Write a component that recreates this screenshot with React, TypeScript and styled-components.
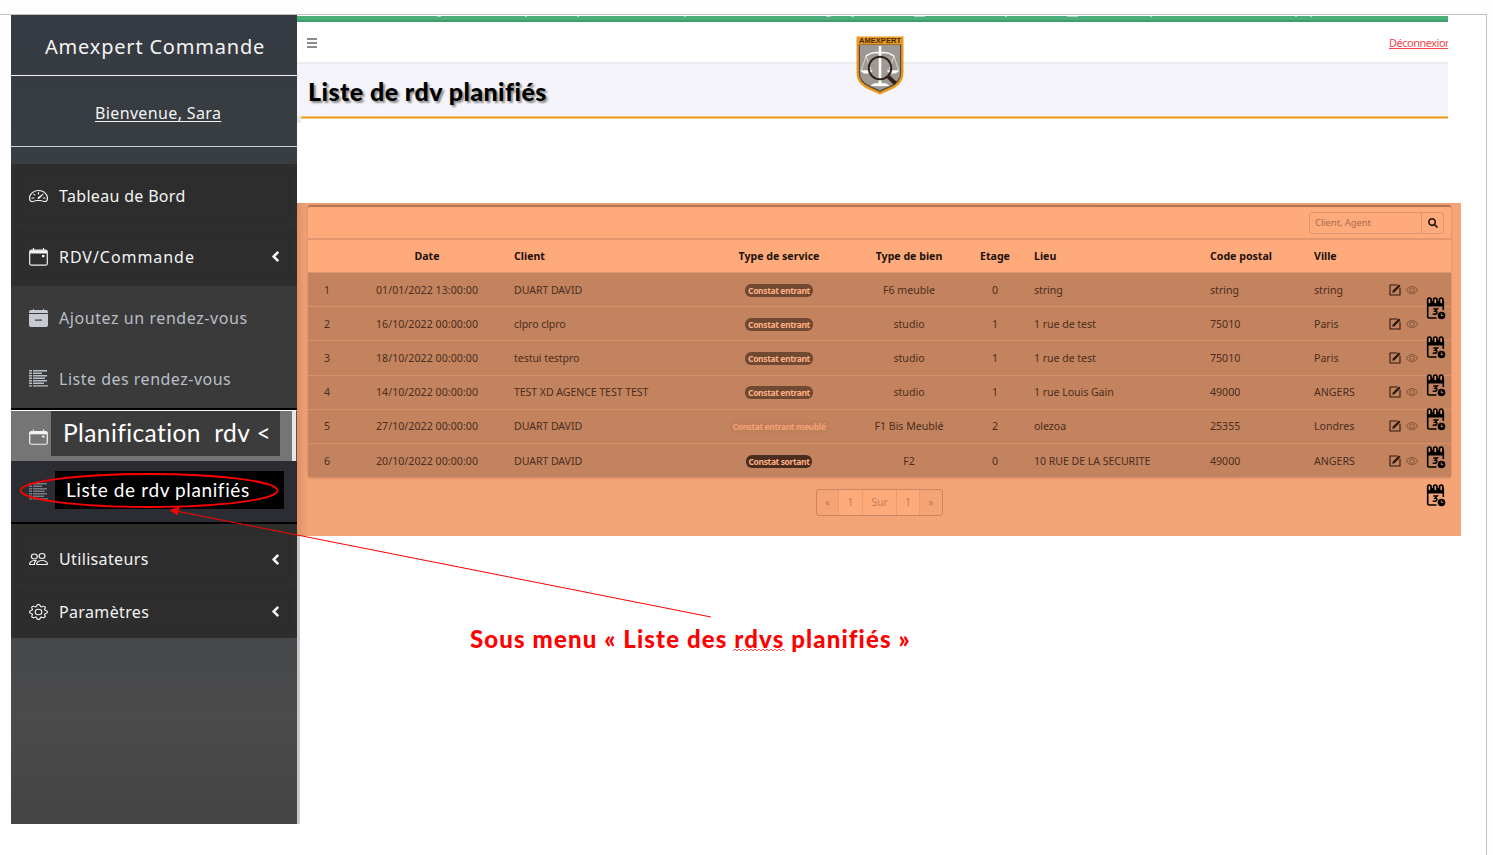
import React from "react";
import styled, { createGlobalStyle, css } from "styled-components";
import { BsSpeedometer2, BsPeople, BsGear, BsEye } from "react-icons/bs";
import { FaSearch, FaAngleLeft } from "react-icons/fa";

const GlobalStyle = createGlobalStyle`
  * { box-sizing: border-box; }
  body { margin: 0; background: #fdfdfd; font-family: "Noto Sans", "Open Sans", sans-serif; overflow: hidden; }
`;

const Screen = styled.div`
  position: relative;
  width: 1493px;
  height: 855px;
  padding-top: 14px;
  overflow: hidden;
`;
const Slide = styled.div`
  display: flex;
  width: 1487px;
  height: 841px;
  padding-left: 11px;
  background: #fff;
  border: 1px solid #c3c3c3;
  border-width: 1px 1px 0 0;
`;

const Sidebar = styled.aside`
  width: 286px;
  height: 809px;
  flex: none;
  display: flex;
  flex-direction: column;
  color: #f3f3f3;
  background: linear-gradient(#363a43 0, #383e41 150px, #45474a 622px, #4b4b4b 700px, #444 809px);
`;
const Brand = styled.div`
  height: 61px;
  padding: 17px 0 0 34px;
  border-bottom: 1px solid #f4f5f6;
  font-size: 20px;
  line-height: 30px;
  letter-spacing: 0.8px;
  white-space: nowrap;
`;
const Welcome = styled.div`
  height: 71px;
  margin-bottom: 17px;
  padding: 25px 0 0 84px;
  border-bottom: 1px solid #c9ccd2;
  font-size: 16px;
  line-height: 24px;
  letter-spacing: 0.36px;
  text-decoration: underline;
  text-underline-offset: 2px;
  text-decoration-thickness: 1px;
  white-space: nowrap;
`;
type Tone = "main" | "sub" | "active" | "current";
const tones = {
  main: css`background: #2d2d2d; box-shadow: inset 0 0 7px #323232;`,
  sub: css`background: #3a3a3a; color: #b9bec8;`,
  active: css`background: #757575; border-top: 1px solid #fff; border-right: 1px solid #555;`,
  current: css`background: #2c2d32; color: #777a84;`,
};
const MenuItem = styled.div<{ $tone: Tone; $h: number; $drop?: number; $line?: boolean }>`
  display: flex;
  align-items: center;
  height: ${p => p.$h}px;
  padding: ${p => p.$drop ?? 2}px 13px 0 18px;
  font-size: 16px;
  white-space: nowrap;
  ${p => tones[p.$tone]}
  ${p => p.$line && css`border-bottom: 2px solid #000;`}
  > svg { flex: none; }
`;
const Label = styled.span<{ $ls: number }>`
  flex: 1;
  margin-left: 11px;
  letter-spacing: ${p => p.$ls}px;
`;
const Cover = styled.span<{ $black?: boolean }>`
  display: flex;
  align-items: center;
  flex: none;
  width: 229px;
  height: ${p => (p.$black ? 38 : 45)}px;
  margin: 0 0 ${p => (p.$black ? 4 : 5)}px ${p => (p.$black ? 7 : 3)}px;
  padding-left: ${p => (p.$black ? 11 : 12)}px;
  background: ${p => (p.$black ? "#000" : "#3c3c3c")};
  color: #fff;
  font-family: Lato, sans-serif;
  font-size: ${p => (p.$black ? 19 : 24.5)}px;
  letter-spacing: ${p => (p.$black ? 0.61 : 0.41)}px;
  line-height: 1;
`;
const ActiveEdge = styled.span`
  width: 4px;
  height: 50px;
  margin-left: 12px;
  background: #e6e6e6;
  flex: none;
`;
const DashboardIcon = styled(BsSpeedometer2)`
  width: 19px;
  height: 16px;
`;
const UsersIcon = styled(BsPeople)`
  width: 19px;
  height: 16px;
`;
const SettingsIcon = styled(BsGear)`
  width: 19px;
  height: 16px;
`;

const Main = styled.main`
  flex: 1;
  display: flex;
  flex-direction: column;
  align-items: flex-start;
`;
const GreenBar = styled.div`
  display: flex;
  width: 1151px;
  height: 7px;
  padding-left: 140px;
  border-top: 1px solid #fff;
  background: linear-gradient(#4bae7b 0 4px, #3e9e6c 4px);
`;
const TabMark = styled.i<{ $gap: number; $w: number }>`
  width: ${p => p.$w}px;
  height: 1px;
  margin-right: ${p => p.$gap}px;
  background: #a8d6be;
`;
const TopBar = styled.header`
  display: flex;
  justify-content: space-between;
  align-items: flex-start;
  width: 1151px;
  height: 42px;
  padding: 16px 0 0 10px;
  overflow: hidden;
  border-bottom: 2px solid #ebecf1;
`;
const Logout = styled.a`
  width: 59px;
  margin-top: -4px;
  overflow: hidden;
  white-space: nowrap;
  color: #f4454c;
  font-size: 11px;
  line-height: 18px;
  letter-spacing: -0.5px;
  text-decoration: underline;
`;
const TitleBand = styled.div`
  width: 1151px;
  height: 52px;
  padding: 10px 0 0 11px;
  background: #f4f4fa;
`;
const Title = styled.h1`
  margin: 0;
  color: #000;
  font: 900 25px/34px Lato, sans-serif;
  letter-spacing: 0.44px;
  text-shadow: 2px 2px 2px #8b8b8b;
  white-space: nowrap;
`;
const OrangeRule = styled.div`
  width: 1151px;
  height: 7px;
  margin-bottom: 80px;
  border-left: 4px solid #e7e8ec;
  background: linear-gradient(#f6c274 0 1px, #eb9c22 1px 2px, #f8c983 2px 3px, #fff 3px);
`;
const Panel = styled.section`
  position: relative;
  display: flex;
  flex-direction: column;
  align-items: center;
  width: 1164px;
  height: 333px;
  padding: 2px 10px 0 11px;
  background: linear-gradient(90deg, #dc9069 0, #f4a377 11px, #f5a477 100%);
`;
const BottomStrip = styled.div`
  width: 3px;
  height: 288px;
  background: #c8c8c8;
`;
const Card = styled.div`
  width: 1143px;
  height: 273px;
  flex: none;
  border-top: 2px solid #b17552;
  border-radius: 3px;
  overflow: hidden;
  background: #ffaa7b;
  box-shadow: 0 0 2px #b8754f;
`;
const Toolbar = styled.div`
  display: flex;
  justify-content: flex-end;
  height: 33px;
  padding: 5px 7px 0 0;
  border-bottom: 2px solid #e3976e;
`;
const SearchBox = styled.div`
  display: flex;
  width: 135px;
  height: 22px;
  border: 1px solid #e0966c;
  border-radius: 3px;
  color: #a76d4d;
  font-size: 9.5px;
  line-height: 20px;
`;
const SearchText = styled.span`
  flex: 1;
  padding-left: 5px;
  letter-spacing: -0.1px;
`;
const SearchButton = styled.span`
  display: flex;
  align-items: center;
  justify-content: center;
  width: 22px;
  border-left: 1px solid #e0966c;
  color: #1d120c;
`;
const Row = styled.div<{ $head?: boolean }>`
  display: grid;
  grid-template-columns: 38px 162px 194px 154px 106px 66px 176px 104px 75px 68px;
  align-items: center;
  height: ${p => (p.$head ? 33 : 34.2)}px;
  color: ${p => (p.$head ? "#1c110b" : "#4b2d1e")};
  background: ${p => (p.$head ? "#ffaa7b" : "#c3835f")};
  border-bottom: 1px solid ${p => (p.$head ? "#e0966c" : "#d9906a")};
  font-size: 10.6px;
  font-weight: ${p => (p.$head ? 700 : 400)};
`;
const Cell = styled.span<{ $mid?: boolean; $ls?: number }>`
  padding-left: ${p => (p.$mid ? 0 : 6)}px;
  text-align: ${p => (p.$mid ? "center" : "left")};
  letter-spacing: ${p => p.$ls ?? 0}px;
  white-space: nowrap;
`;
const Badge = styled.span<{ $bg: string; $fg: string }>`
  display: block;
  width: fit-content;
  height: 13px;
  margin: 1px auto 0;
  padding: 0 3px;
  border-radius: 6px;
  background: ${p => p.$bg};
  color: ${p => p.$fg};
  font-size: 8.5px;
  font-weight: 700;
  line-height: 13px;
  letter-spacing: -0.38px;
`;
const Actions = styled.span`
  display: flex;
  align-items: center;
  gap: 5px;
  padding-left: 6px;
`;
const Pager = styled.div`
  display: flex;
  width: 127px;
  height: 27px;
  margin: 11px 0 0 0;
  border: 1px solid #cb8560;
  border-radius: 3px;
  color: #bd7d5a;
  font-size: 10.5px;
  line-height: 25px;
  text-align: center;
`;
const PageCell = styled.span<{ $w: number; $lit?: boolean }>`
  width: ${p => p.$w}px;
  background: ${p => (p.$lit ? "#ffaa7b" : "transparent")};
  border-right: 1px solid #e99b71;
  &:last-child { border-right: 0; }
`;
const Planner = styled.div`
  position: absolute;
  top: 94px;
  left: 1129px;
  width: 20px;
`;
const PlannerSlot = styled.div<{ $h: number }>`
  height: ${p => p.$h}px;
`;
const Shield = styled.svg`
  position: absolute;
  left: 856px;
  top: 36px;
`;
const Annotation = styled.svg`
  position: absolute;
  left: 0;
  top: 0;
`;
const Note = styled.p`
  position: absolute;
  left: 470px;
  top: 622px;
  margin: 0;
  color: #f00;
  font: 900 24px/34px Lato, sans-serif;
  letter-spacing: 1.12px;
  white-space: nowrap;
`;

const CalendarIcon = ({ h = 18, drop = 0 }: { h?: number; drop?: number }) => (
  <svg width="19" height={h + drop} viewBox={`0 ${-drop} 19 ${18 + drop}`} preserveAspectRatio="none" fill="none" stroke="#f3f3f3">
    <rect x="0.7" y="2.2" width="17.6" height="15" rx="1.8" strokeWidth="1.2" />
    <path d="M1 2.5h17v3H1z" fill="#f3f3f3" stroke="none" />
    <path d="M4.5 0v3M14.5 0v3" strokeWidth="1.2" />
    <path d="M13 7h2.5v2.2H13z" fill="#f3f3f3" stroke="none" />
  </svg>
);
const CalendarMinusIcon = () => (
  <svg width="19" height="18" viewBox="0 0 19 18" fill="#c6cad3">
    <path d="M4 0h1v1h9V0h1v1h2q2 0 2 2v1H0V3q0-2 2-2h2zM0 5h19v11q0 2-2 2H2q-2 0-2-2z" />
    <path d="M6 10.5h7v1.2H6z" fill="#3a3a3a" />
  </svg>
);
const ListIcon = () => (
  <svg width="19" height="17" viewBox="0 0 19 17" stroke="currentColor" strokeWidth="1.4">
    <path d="M0 .8h3M0 3.3h3M0 5.8h3M0 8.3h3M0 10.8h3M0 13.3h3M0 15.9h3M4 .8h14M4 3.3h9M4 5.8h14M4 8.3h12M4 10.8h14M4 13.3h11M4 15.9h15" />
  </svg>
);
const EditIcon = () => (
  <svg width="12" height="12" viewBox="0 0 12 12" fill="none" stroke="#2a1910">
    <path d="M8.5 1H1v10h10V4" strokeWidth="1.1" />
    <path d="M3.2 8.8l.6-2.3L9.9.4l1.7 1.7-6.1 6.1z" fill="#2a1910" stroke="none" />
  </svg>
);
const PlanIcon = () => (
  <svg width="20" height="23" viewBox="0 0 20 23" fill="none" stroke="#000">
    <path d="M1 4h17v5.500H1z" fill="#000" stroke="none" />
    <path d="M1.700 5v14.500q0 1.500 1.500 1.500H10.500M17.300 5v8" strokeWidth="1.600" />
    <g strokeWidth="1.700" fill="#e39a70">
      <rect x="1.700" y="1" width="3.400" height="6" rx="1.700" />
      <rect x="7.600" y="1" width="3.400" height="6" rx="1.700" />
      <rect x="13.500" y="1" width="3.400" height="6" rx="1.700" />
    </g>
    <path d="M7.300 12h4l-2.300 2.300q2.500 0 1.800 1.900-.8 1.600-4.100.9" strokeWidth="1.500" />
    <circle cx="15.500" cy="18.500" r="3.800" fill="#000" stroke="none" />
    <path d="M15.300 16.500v2.100h1.900" stroke="#e39a70" strokeWidth="0.900" />
  </svg>
);
const Logo = () => (
  <Shield width="48" height="59" viewBox="0 0 48 59" fill="none">
    <path d="M.5.5h47V37q0 10-10 15.500L24 58.500 10.500 52.500Q.5 47 .5 37z" fill="#e99a22" />
    <path d="M2.800 8.500h42.400V37q0 8.500-9 13.200L24 56 11.800 50.200Q2.800 45.500 2.800 37z" fill="#5b4a39" />
    <path d="M4 9h40v28q0 7.500-8.400 12.100L24 54.600 12.400 49.100Q4 44.500 4 37z" fill="#9d9894" />
    <text x="3" y="7.200" fontFamily="Liberation Sans" fontWeight="700" fontSize="6.800" textLength="42" lengthAdjust="spacingAndGlyphs" fill="#49290b">AMEXPERT</text>
    <g stroke="#fff">
      <path d="M10 20q7-5 14-3 7-2 14 3" strokeWidth="1.500" />
      <path d="M10 20L5.500 34M10 20l5 14M38 20l-5 14M38 20l4.500 14" strokeWidth=".6" />
      <path d="M24 10v38" strokeWidth="2.600" />
      <path d="M4.500 34.500h12q-2 3-6 3t-6-3zM31 34.500h12q-2 3-6 3t-6-3zM15 50q1-3 9-3t9 3z" fill="#fff" strokeWidth=".4" />
    </g>
    <circle cx="24" cy="32" r="11.300" stroke="#30211b" strokeWidth="1.900" />
    <path d="M32 40.500l7.500 7" stroke="#30211b" strokeWidth="3.800" />
  </Shield>
);

const tabMarks = [
  [4, 84], [2, 50], [2, 105], [2, 140], [5, 20], [3, 60], [11, 80], [2, 60], [11, 72], [2, 143], [2, 13], [2, 0],
];
const rows = [
  ["01/01/2022 13:00:00", "DUART DAVID", "Constat entrant", "F6 meuble", "0", "string", "string", "string"],
  ["16/10/2022 00:00:00", "clpro clpro", "Constat entrant", "studio", "1", "1 rue de test", "75010", "Paris"],
  ["18/10/2022 00:00:00", "testui testpro", "Constat entrant", "studio", "1", "1 rue de test", "75010", "Paris"],
  ["14/10/2022 00:00:00", "TEST XD AGENCE TEST TEST", "Constat entrant", "studio", "1", "1 rue Louis Gain", "49000", "ANGERS"],
  ["27/10/2022 00:00:00", "DUART DAVID", "Constat entrant meublé", "F1 Bis Meublé", "2", "olezoa", "25355", "Londres"],
  ["20/10/2022 00:00:00", "DUART DAVID", "Constat sortant", "F2", "0", "10 RUE DE LA SECURITE", "49000", "ANGERS"],
];
const badgeColors: Record<string, [string, string]> = {
  "Constat entrant": ["#6f4932", "#ffb083"],
  "Constat entrant meublé": ["#c07f5b", "#f4a075"],
  "Constat sortant": ["#4a2d1e", "#ffb083"],
};
const squiggle = "M733 651" + "l2-2l2 2".repeat(13);

export default function App() {
  return (
    <Screen>
      <GlobalStyle />
      <Slide>
        <Sidebar>
          <Brand>Amexpert Commande</Brand>
          <Welcome>Bienvenue, Sara</Welcome>
          <MenuItem $tone="main" $h={61}>
            <DashboardIcon preserveAspectRatio="none" />
            <Label $ls={0.32}>Tableau de Bord</Label>
          </MenuItem>
          <MenuItem $tone="main" $h={61}>
            <CalendarIcon />
            <Label $ls={0.95}>RDV/Commande</Label>
            <FaAngleLeft size={17} />
          </MenuItem>
          <MenuItem $tone="sub" $h={61}>
            <CalendarMinusIcon />
            <Label $ls={0.57}>Ajoutez un rendez-vous</Label>
          </MenuItem>
          <MenuItem $tone="sub" $h={63} $line>
            <ListIcon />
            <Label $ls={0.5}>Liste des rendez-vous</Label>
          </MenuItem>
          <MenuItem $tone="active" $h={51} $drop={0}>
            <CalendarIcon h={15} drop={3} />
            <Cover>Planification&nbsp; rdv &lt;</Cover>
            <ActiveEdge />
          </MenuItem>
          <MenuItem $tone="current" $h={63} $drop={0} $line>
            <ListIcon />
            <Cover $black>Liste de rdv planifiés</Cover>
          </MenuItem>
          <MenuItem $tone="main" $h={61} $drop={9}>
            <UsersIcon preserveAspectRatio="none" />
            <Label $ls={0.35}>Utilisateurs</Label>
            <FaAngleLeft size={17} />
          </MenuItem>
          <MenuItem $tone="main" $h={53} $drop={0}>
            <SettingsIcon preserveAspectRatio="none" />
            <Label $ls={0.35}>Paramètres</Label>
            <FaAngleLeft size={17} />
          </MenuItem>
        </Sidebar>
        <Main>
          <GreenBar>
            {tabMarks.map(([w, gap], i) => <TabMark key={i} $w={w} $gap={gap} />)}
          </GreenBar>
          <TopBar>
            <svg width="10" height="10" stroke="#666" strokeWidth="1.400">
              <path d="M0 1h10M0 5h10M0 9h10" />
            </svg>
            <Logout>Déconnexion</Logout>
          </TopBar>
          <TitleBand>
            <Title>Liste de rdv planifiés</Title>
          </TitleBand>
          <OrangeRule />
          <Panel>
            <Card>
              <Toolbar>
                <SearchBox>
                  <SearchText>Client, Agent</SearchText>
                  <SearchButton><FaSearch size={10} /></SearchButton>
                </SearchBox>
              </Toolbar>
              <Row $head>
                <Cell />
                <Cell $mid>Date</Cell>
                <Cell>Client</Cell>
                <Cell $mid>Type de service</Cell>
                <Cell $mid>Type de bien</Cell>
                <Cell $mid>Etage</Cell>
                <Cell>Lieu</Cell>
                <Cell>Code postal</Cell>
                <Cell>Ville</Cell>
              </Row>
              {rows.map(([date, client, service, bien, etage, lieu, cp, ville], i) => (
                <Row key={i}>
                  <Cell $mid>{i + 1}</Cell>
                  <Cell $mid $ls={0.05}>{date}</Cell>
                  <Cell $ls={-0.08}>{client}</Cell>
                  <Cell $mid>
                    <Badge $bg={badgeColors[service][0]} $fg={badgeColors[service][1]}>{service}</Badge>
                  </Cell>
                  <Cell $mid>{bien}</Cell>
                  <Cell $mid>{etage}</Cell>
                  <Cell $ls={-0.05}>{lieu}</Cell>
                  <Cell>{cp}</Cell>
                  <Cell>{ville}</Cell>
                  <Actions>
                    <EditIcon />
                    <BsEye size={12} color="#7d4f37" />
                  </Actions>
                </Row>
              ))}
            </Card>
            <Pager>
              <PageCell $w={22}>«</PageCell>
              <PageCell $w={24} $lit>1</PageCell>
              <PageCell $w={34} $lit>Sur</PageCell>
              <PageCell $w={23} $lit>1</PageCell>
              <PageCell $w={22}>»</PageCell>
            </Pager>
            <Planner>
              {[39, 38, 34, 38, 38, 23].map((h, i) => (
                <PlannerSlot key={i} $h={h}><PlanIcon /></PlannerSlot>
              ))}
            </Planner>
          </Panel>
          <BottomStrip />
        </Main>
      </Slide>
      <Logo />
      <Note>Sous menu « Liste des rdvs planifiés »</Note>
      <Annotation width="1493" height="855" fill="none" stroke="#f00">
        <ellipse cx="149" cy="490.500" rx="128.500" ry="16.500" strokeWidth="1.800" />
        <path d="M711 617L176 511" strokeWidth="1" />
        <path d="M169.500 510l10-3.500-2 9z" fill="#f00" stroke="none" />
        <path d={squiggle} strokeWidth="0.700" />
      </Annotation>
    </Screen>
  );
}
